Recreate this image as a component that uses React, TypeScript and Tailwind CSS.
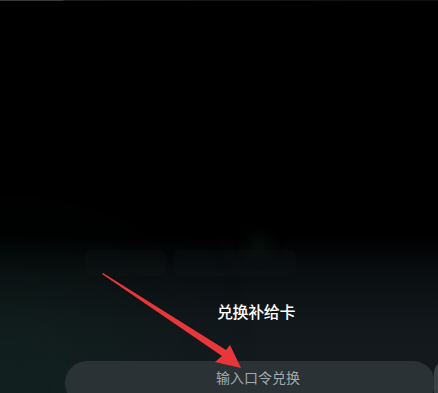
export default function App() {
  return (
    <div
      className="relative w-[438px] h-[393px] overflow-hidden bg-black"
      style={{ fontFamily: '"Noto Sans CJK SC", "Noto Sans", sans-serif' }}
    >
      {/* backdrop glow */}
      <div className="absolute inset-0 bg-[linear-gradient(to_bottom,#000_0%,#000_60%,#0a0e10_70%,#11171a_82%,#151c1f_100%)]" />
      <div className="absolute -left-28 top-[300px] w-[240px] h-[160px] rounded-full bg-[#0c2a1e] opacity-50 blur-3xl" />
      <div className="absolute left-0 right-0 top-0 h-px bg-[linear-gradient(to_right,#3a3a3a_0%,#3a3a3a_14%,#1a1a1a_15%,#111_100%)]" />

      <div className="relative flex flex-col pt-[300px]">
        {/* faint blurred cards */}
        <div className="absolute top-[250px] left-[86px] flex gap-2 opacity-20">
          <div className="w-[80px] h-[26px] rounded-md bg-[#151b1d]" />
          <div className="w-[122px] h-[26px] rounded-md bg-[#151b1d]" />
        </div>
        <div className="absolute top-[236px] left-[250px] w-[18px] h-[18px] rounded-full bg-[#0b1f15] opacity-70 blur-sm" />

        <h2 className="ml-[217px] text-[16px] leading-[22px] font-medium text-white tracking-tight">兑换补给卡</h2>

        <div className="mt-[39px] ml-[65px] w-[370px] h-[44px] rounded-full bg-[#2a3236] flex items-start pt-[6px] pl-[151px]">
          <span className="text-[14px] leading-[20px] text-[#a3a9ac]">输入口令兑换</span>
        </div>
      </div>

      <div className="absolute left-[434px] top-[362px] w-[20px] h-[40px] rounded-full bg-[#3a4246]" />

      {/* red arrow annotation */}
      <svg className="absolute inset-0" width="438" height="393" viewBox="0 0 438 393">
        <polygon points="103,273 226,350 230,345 241,368 215,362 222,356 102,274" fill="#e8363a" />
      </svg>
    </div>
  );
}
